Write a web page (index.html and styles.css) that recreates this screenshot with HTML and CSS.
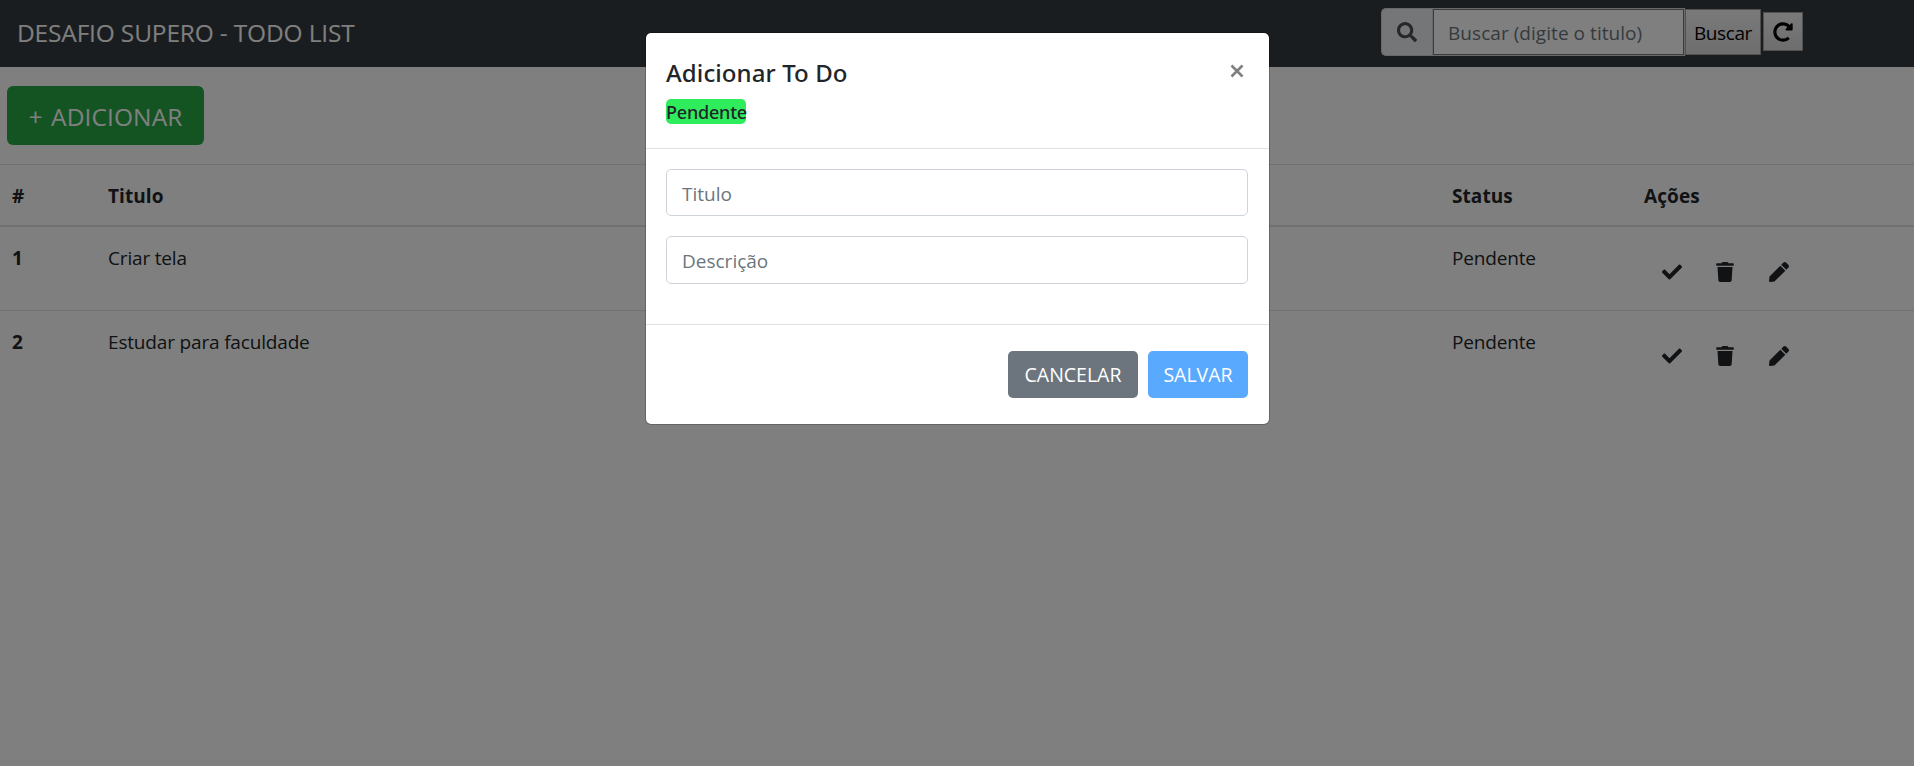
FILE: index.html
```html
<!DOCTYPE html>
<html lang="pt-BR">
<head>
<meta charset="utf-8">
<title>Desafio Supero - Todo List</title>
<link rel="stylesheet" href="styles.css">
</head>
<body>
<svg width="0" height="0" class="sprite">
  <symbol id="check" viewBox="0 0 512 512"><path d="M173.898 439.404l-166.4-166.4c-9.997-9.997-9.997-26.206 0-36.204l36.203-36.204c9.997-9.998 26.207-9.998 36.204 0L192 312.69 432.095 72.596c9.997-9.997 26.207-9.997 36.204 0l36.203 36.204c9.997 9.997 9.997 26.206 0 36.204l-294.4 294.401c-9.998 9.997-26.207 9.997-36.204-.001z"/></symbol>
  <symbol id="trash" viewBox="0 0 448 512"><path d="M432 32H312l-9.4-18.7A24 24 0 0 0 281.1 0H166.8a23.72 23.72 0 0 0-21.4 13.3L136 32H16A16 16 0 0 0 0 48v32a16 16 0 0 0 16 16h416a16 16 0 0 0 16-16V48a16 16 0 0 0-16-16zM53.2 467a48 48 0 0 0 47.9 45h245.8a48 48 0 0 0 47.9-45L416 128H32z"/></symbol>
  <symbol id="pen" viewBox="0 0 512 512"><path d="M290.74 93.24l128.02 128.02-277.99 277.99-114.14 12.6C11.35 513.54-1.56 500.62.14 485.34l12.7-114.22 277.9-277.88zm207.2-19.06l-60.11-60.11c-18.75-18.75-49.16-18.75-67.91 0l-56.55 56.55 128.02 128.02 56.55-56.55c18.75-18.76 18.75-49.16 0-67.91z"/></symbol>
  <symbol id="search" viewBox="0 0 512 512"><path d="M505 442.7L405.3 343c-4.500-4.500-10.600-7-17-7H372c27.600-35.300 44-79.700 44-128C416 93.100 322.900 0 208 0S0 93.100 0 208s93.100 208 208 208c48.300 0 92.700-16.400 128-44v16.300c0 6.400 2.500 12.500 7 17l99.700 99.700c9.400 9.400 24.600 9.400 33.900 0l28.300-28.300c9.400-9.400 9.400-24.600.1-34zM208 336c-70.700 0-128-57.200-128-128 0-70.700 57.200-128 128-128 70.700 0 128 57.200 128 128 0 70.700-57.200 128-128 128z"/></symbol>
  <symbol id="redo" viewBox="0 0 512 512"><path d="M256.455 8c66.269.119 126.437 26.233 170.859 68.685l35.715-35.715C478.149 25.851 504 36.559 504 57.941V192c0 13.255-10.745 24-24 24H345.941c-21.382 0-32.09-25.851-16.971-40.971l41.750-41.750c-30.864-28.899-70.801-44.907-113.230-45.273-92.398-.798-170.283 73.977-169.484 169.442C88.764 348.009 162.184 424 256 424c41.127 0 79.997-14.678 110.629-41.556 4.743-4.161 11.906-3.908 16.368.553l39.662 39.662c4.872 4.872 4.631 12.815-.482 17.433C378.202 479.813 319.926 504 256 504 119.034 504 8.001 392.967 8 256.002 7.999 119.193 119.646 7.755 256.455 8z"/></symbol>
</svg>
<header class="navbar">
  <span class="brand">DESAFIO SUPERO - TODO LIST</span>
  <form class="search">
    <span class="search-icon"><svg class="icon"><use href="#search"/></svg></span>
    <span class="search-input">Buscar (digite o titulo)</span>
    <button type="button" class="search-button">Buscar</button>
    <button type="button" class="reload-button"><svg class="icon"><use href="#redo"/></svg></button>
  </form>
</header>
<main>
  <div class="toolbar"><button type="button" class="add-button">+ ADICIONAR</button></div>
  <div class="table">
    <div class="row head"><span>#</span><span>Titulo</span><span>Status</span><span>Ações</span></div>
    <div class="row"><b>1</b><span>Criar tela</span><span>Pendente</span>
      <span class="actions"><svg class="icon"><use href="#check"/></svg><svg class="icon trash"><use href="#trash"/></svg><svg class="icon"><use href="#pen"/></svg></span></div>
    <div class="row"><b>2</b><span>Estudar para faculdade</span><span>Pendente</span>
      <span class="actions"><svg class="icon"><use href="#check"/></svg><svg class="icon trash"><use href="#trash"/></svg><svg class="icon"><use href="#pen"/></svg></span></div>
  </div>
</main>
<div class="backdrop">
  <section class="modal">
    <div class="modal-header">
      <div><h5 class="modal-title">Adicionar To Do</h5><span class="badge">Pendente</span></div>
      <svg class="close" viewBox="0 0 14 14"><path d="M1.500 1.500l11 11M12.500 1.500l-11 11"/></svg>
    </div>
    <div class="modal-body">
      <div class="field">Titulo</div>
      <div class="field second">Descrição</div>
    </div>
    <div class="modal-footer">
      <button type="button" class="btn cancel">CANCELAR</button>
      <button type="button" class="btn save">SALVAR</button>
    </div>
  </section>
</div>
</body>
</html>
```
FILE: styles.css
```css
* { box-sizing: border-box; }
html, body { height: 100%; }
body {
  margin: 0;
  overflow: hidden;
  background: #fff;
  color: #212529;
  font-family: "Open Sans", "Noto Sans", sans-serif;
  font-size: 19px;
  line-height: 30px;
  white-space: nowrap;
}
button { font: inherit; margin: 0; }
.sprite { position: absolute; }
.icon { display: block; width: 20px; height: 20px; fill: currentColor; }
.trash { width: 18px; }

.navbar {
  display: flex;
  justify-content: space-between;
  height: 67px;
  padding: 8px 111px 0 17px;
  background: #343a40;
}
.brand { padding-top: 10px; color: #fff; font-size: 24.5px; letter-spacing: -0.17px; }
.search { display: flex; }
.search-icon {
  display: flex;
  align-items: center;
  justify-content: center;
  width: 52px;
  height: 48px;
  border: 1px solid #ced4da;
  border-right: 0;
  border-radius: 5px 0 0 5px;
  background: #e9ecef;
  color: #495057;
}
.search-input {
  width: 252px;
  height: 48px;
  padding: 9px 15px;
  border: 1px solid #ced4da;
  background: #fff;
  box-shadow: inset 0 0 0 1px #767676;
  color: #6c757d;
  letter-spacing: 0.05px;
}
.search-icon { width: 51px; margin-left: 0; }
.search-input { width: 253px; }
.search-button, .reload-button {
  border: 1px solid #a0a0a0;
  background: linear-gradient(#f4f4f4, #dcdcdc);
  color: #000;
}
.search-button { width: 76px; height: 46px; margin-top: 1px; padding: 1px 0 0; letter-spacing: -0.4px; }
.reload-button { width: 40px; height: 39px; margin: 4px 0 0 2px; padding: 0 9px; }

.toolbar { padding: 19px 7px; height: 97px; }
.add-button {
  width: 197px;
  height: 59px;
  padding: 2px 0 0;
  border: 0;
  border-radius: 6px;
  background: #28a745;
  color: #fff;
  font-size: 24.5px;
  letter-spacing: 0.1px;
  word-spacing: 2px;
}
.row {
  display: grid;
  grid-template-columns: 96px 1344px 192px 1fr;
  height: 84px;
  padding: 16px 0 0 12px;
  border-top: 1px solid #dee2e6;
  letter-spacing: -0.17px;
}
.head { height: 63px; border-bottom: 2px solid #dee2e6; font-weight: 700; letter-spacing: 0.08px; }
.head + .row { border-top: 0; height: 83px; }
.actions { display: flex; gap: 34px; padding: 19px 0 0 18px; }
.trash { margin-right: 1px; }

.backdrop {
  position: absolute;
  inset: 0;
  display: flex;
  justify-content: center;
  align-items: flex-start;
  padding: 32px 0 0 1px;
  background: rgba(0, 0, 0, 0.5);
}
.modal {
  width: 625px;
  height: 393px;
  border: 1px solid rgba(0, 0, 0, 0.2);
  border-radius: 6px;
  background: #fff;
  background-clip: padding-box;
}
.modal-header {
  display: flex;
  justify-content: space-between;
  height: 116px;
  padding: 21px 21px 20px 20px;
  border-bottom: 1px solid #dee2e6;
}
.modal-title { margin: 0; font: 500 24px/38px "Noto Sans", "Open Sans", sans-serif; letter-spacing: 0.1px; }
.badge {
  display: block;
  width: 80px;
  height: 25px;
  margin-top: 7px;
  border-radius: 5px;
  background: #2eec5c;
  font: 500 18px/26px "Noto Sans", "Open Sans", sans-serif;
  letter-spacing: -0.2px;
}
.close { width: 14px; height: 14px; margin: 10px 4px 0 0; fill: none; stroke: #7f7f7f; stroke-width: 2.6; }
.modal-body { height: 175px; padding: 20px 21px 20px 20px; }
.field {
  height: 47px;
  margin-bottom: 20px;
  padding: 9px 15px;
  border: 1px solid #ced4da;
  border-radius: 5px;
  color: #6c757d;
}
.second { height: 48px; }
.modal-footer {
  display: flex;
  justify-content: flex-end;
  gap: 10px;
  padding: 26px 21px 26px 20px;
  border-top: 1px solid #dee2e6;
}
.btn { height: 47px; padding: 1px 0 0; border: 0; border-radius: 5px; color: #fff; font-size: 19.5px; }
.cancel { width: 130px; background: #6c757d; }
.save { width: 100px; background: #59a9ff; }
```
